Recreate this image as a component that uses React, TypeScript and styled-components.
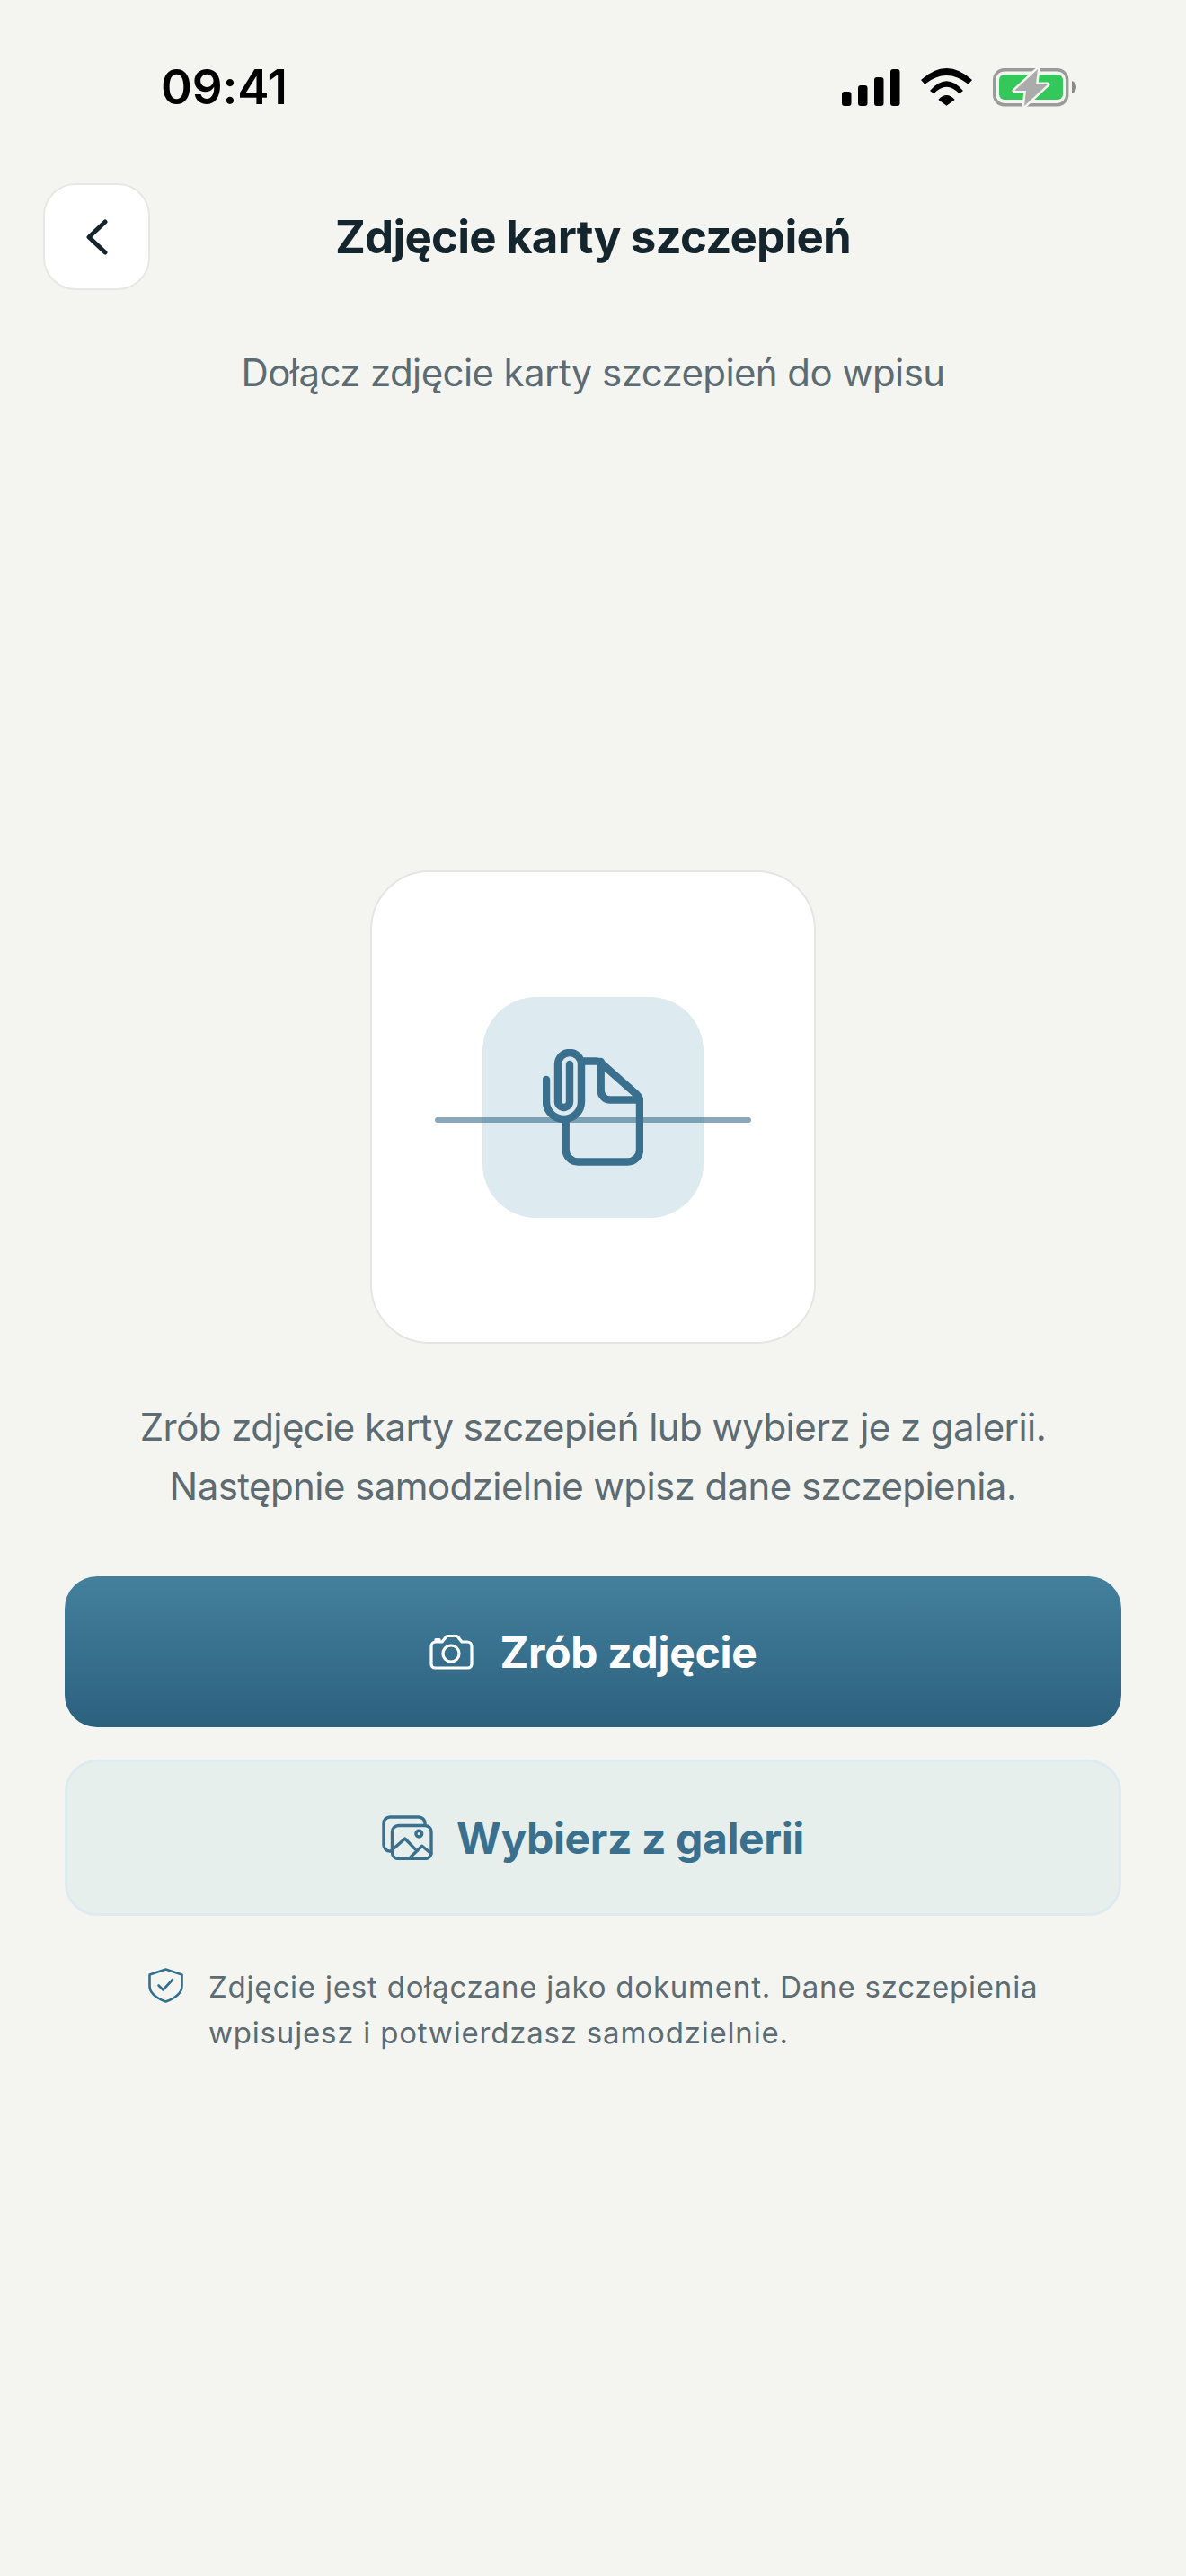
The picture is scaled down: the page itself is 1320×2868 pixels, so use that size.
import styled, { createGlobalStyle } from "styled-components";

const GlobalStyle = createGlobalStyle`
  html, body {
    margin: 0;
    padding: 0;
    background: #f4f5f1;
  }
`;

const Page = styled.div`
  width: 1320px;
  height: 2868px;
  background: #f4f5f1;
  font-family: Inter, "Noto Sans", sans-serif;
  display: flex;
  flex-direction: column;
  overflow: hidden;
`;

const StatusBar = styled.div`
  height: 194px;
  padding: 0 122px 0 179px;
  display: flex;
  align-items: center;
  justify-content: space-between;
`;

const Time = styled.span`
  font-size: 53px;
  font-weight: 600;
  letter-spacing: -0.2px;
  color: #000;
`;

const StatusIcons = styled.div`
  display: flex;
  align-items: center;
  gap: 23px;
`;

const Header = styled.header`
  margin-top: 10px;
  padding: 0 48px;
  display: grid;
  grid-template-columns: 119px 1fr 119px;
  align-items: center;
`;

const BackButton = styled.button`
  width: 119px;
  height: 119px;
  padding: 0;
  box-sizing: border-box;
  background: #fff;
  border: 2px solid #e7e8e5;
  border-radius: 36px;
  display: flex;
  align-items: center;
  justify-content: center;
`;

const Title = styled.h1`
  margin: 0;
  font-size: 51px;
  font-weight: 700;
  letter-spacing: -0.8px;
  color: #14252e;
  text-align: center;
`;

const Subtitle = styled.p`
  margin: 64px 0 0;
  font-size: 42px;
  line-height: 56px;
  letter-spacing: -0.6px;
  color: #5d6b72;
  text-align: center;
`;

const Card = styled.div`
  position: relative;
  margin: 526px auto 0;
  width: 496px;
  height: 527px;
  box-sizing: border-box;
  background: #fff;
  border: 2px solid #e5e6e3;
  border-radius: 66px;
  display: flex;
  align-items: center;
  justify-content: center;
`;

const IconTile = styled.div`
  width: 246px;
  height: 246px;
  background: #ddeaf0;
  border-radius: 60px;
  display: flex;
  align-items: center;
  justify-content: center;
`;

const ScanLine = styled.div`
  position: absolute;
  left: 70px;
  right: 70px;
  top: 273px;
  height: 6px;
  border-radius: 3px;
  background: rgba(58, 112, 141, 0.6);
`;

const DocIcon = styled.svg`
  position: absolute;
  display: block;
`;

const Body = styled.p`
  margin: 60px 0 0;
  font-size: 42px;
  line-height: 66px;
  letter-spacing: -0.57px;
  color: #5d6b72;
  text-align: center;
`;

const Actions = styled.div`
  margin-top: 67px;
  padding: 0 72px;
  display: flex;
  flex-direction: column;
  gap: 36px;
`;

const PrimaryButton = styled.button`
  height: 168px;
  border: none;
  border-radius: 36px;
  background: linear-gradient(180deg, #44809c, #2c617e);
  color: #fff;
  font-family: inherit;
  font-size: 48px;
  font-weight: 700;
  letter-spacing: -0.3px;
  display: flex;
  align-items: center;
  justify-content: center;
  gap: 30px;
`;

const SecondaryButton = styled.button`
  height: 174px;
  box-sizing: border-box;
  border: 3px solid #ddeaf0;
  border-radius: 36px;
  background: #e7efec;
  color: #3a708d;
  font-family: inherit;
  font-size: 48px;
  font-weight: 700;
  letter-spacing: -0.4px;
  display: flex;
  align-items: center;
  justify-content: center;
  gap: 26px;
`;

const Note = styled.div`
  margin-top: 54px;
  padding-left: 165px;
  display: flex;
  align-items: flex-start;
  gap: 28px;
`;

const ShieldIcon = styled.svg`
  margin-top: 4px;
  flex-shrink: 0;
`;

const NoteText = styled.p`
  margin: 0;
  font-size: 33px;
  line-height: 51px;
  letter-spacing: 0.8px;
  color: #5d6b72;
`;

function SignalIcon() {
  return (
    <svg width="65" height="41" viewBox="0 0 65 41">
      <rect x="0" y="25" width="10.5" height="16" rx="3" fill="#000" />
      <rect x="18" y="18" width="10.5" height="23" rx="3" fill="#000" />
      <rect x="36" y="9" width="10.5" height="32" rx="3" fill="#000" />
      <rect x="54" y="0" width="10.5" height="41" rx="3" fill="#000" />
    </svg>
  );
}

function WifiIcon() {
  return (
    <svg width="57" height="42" viewBox="0 0 57 42" fill="#000">
      <path d="M0 13 Q28.5 -13 57 13 L52.7 17.7 Q28.5 -1.7 4.3 17.7 Z" />
      <path d="M10 25 Q28.5 3.6 47 25 L42.7 28.3 Q28.5 13.1 14.3 28.3 Z" />
      <path d="M19.3 35 Q28.5 25 37.7 35 L28.5 41.7 Z" />
    </svg>
  );
}

function BatteryIcon() {
  return (
    <svg width="93" height="43" viewBox="0 0 93 43">
      <rect x="1.7" y="1.7" width="81" height="39" rx="11" fill="none" stroke="#9a9a9a" strokeWidth="3.4" />
      <rect x="7" y="7" width="71" height="28" rx="6" fill="#34c759" />
      <path d="M88 14 C91 15 93 18 93 21 C93 24 91 27 88 28 Z" fill="#8a8a8a" />
      <path
        d="M50 1 L24 25 H37 L35 42 L61 18 H48 Z"
        fill="#ababab"
        stroke="#f4f5f1"
        strokeWidth="5"
        strokeLinejoin="round"
        paintOrder="stroke"
      />
    </svg>
  );
}

function ChevronLeft() {
  return (
    <svg width="24" height="40" viewBox="0 0 24 40" fill="none">
      <path d="M21 3 L3 20 L21 37" stroke="#14252e" strokeWidth="5" strokeLinecap="round" strokeLinejoin="round" />
    </svg>
  );
}

function CameraIcon() {
  return (
    <svg width="49" height="39" viewBox="0 0 49 39" fill="none" stroke="#fff" strokeWidth="3.2" strokeLinejoin="round">
      <path d="M2 13 a5 5 0 0 1 5-5 H14 L18 3 a3 3 0 0 1 2-1.5 H30 a3 3 0 0 1 2 1.5 L36 8 H42 a5 5 0 0 1 5 5 V33 a4 4 0 0 1 -4 4 H6 a4 4 0 0 1 -4 -4 Z" />
      <path d="M7 7 V5.5 H11 V7" />
      <circle cx="24" cy="21" r="9" />
    </svg>
  );
}

function GalleryIcon() {
  return (
    <svg width="57" height="50" viewBox="0 0 57 50" fill="none" stroke="#3a708d" strokeWidth="3.4" strokeLinejoin="round" strokeLinecap="round">
      <path d="M48 10 V9 a7 7 0 0 0 -7 -7 H9 a7 7 0 0 0 -7 7 V33 a7 7 0 0 0 7 7 H10" />
      <rect x="11.5" y="11.5" width="43.5" height="37" rx="7" />
      <circle cx="41.3" cy="20.6" r="3.4" />
      <path d="M11 39 L25.7 26 L37 37.6" />
      <path d="M30.7 47.7 L44.7 34.3 L55 42.7" />
    </svg>
  );
}

function ShieldCheck() {
  return (
    <ShieldIcon width="39" height="39" viewBox="0 0 39 39" fill="none" stroke="#33708f" strokeWidth="2.6" strokeLinejoin="round" strokeLinecap="round">
      <path d="M19.5 1.5 L37.5 7.5 V20 C37.5 29 29 34 19.5 37.5 C10 34 1.5 29 1.5 20 V7.5 Z" />
      <path d="M11.5 19.5 L16.5 24.5 L27 13" />
    </ShieldIcon>
  );
}

function App() {
  return (
    <Page>
      <GlobalStyle />
      <StatusBar>
        <Time>09:41</Time>
        <StatusIcons>
          <SignalIcon />
          <WifiIcon />
          <BatteryIcon />
        </StatusIcons>
      </StatusBar>
      <Header>
        <BackButton>
          <ChevronLeft />
        </BackButton>
        <Title>Zdjęcie karty szczepień</Title>
        <span />
      </Header>
      <Subtitle>Dołącz zdjęcie karty szczepień do wpisu</Subtitle>
      <Card>
        <IconTile />
        <ScanLine />
        <DocIcon
          width="112"
          height="130"
          viewBox="0 0 112 130"
          fill="none"
          stroke="#3a708d"
          strokeWidth="8.4"
          strokeLinecap="round"
          strokeLinejoin="round"
        >
          <path d="M4 34 V58.5 A19.5 19.5 0 0 0 43 58.5 V17 A13 13 0 0 0 17 17 V58.5 A6.5 6.5 0 0 0 30 58.5 V17" />
          <path d="M46 13.5 H60 C62 13.5 63.5 14.2 65 15.5 L104 50 C106.8 52.5 108 54 108 57 V112 A13.5 13.5 0 0 1 94.5 125.5 H39.2 A13.5 13.5 0 0 1 25.7 112 V80" />
          <path d="M64.7 14 V46 A10.5 10.5 0 0 0 75.2 56.5 H108" />
        </DocIcon>
      </Card>
      <Body>
        Zrób zdjęcie karty szczepień lub wybierz je z galerii.
        <br />
        Następnie samodzielnie wpisz dane szczepienia.
      </Body>
      <Actions>
        <PrimaryButton>
          <CameraIcon />
          Zrób zdjęcie
        </PrimaryButton>
        <SecondaryButton>
          <GalleryIcon />
          Wybierz z galerii
        </SecondaryButton>
      </Actions>
      <Note>
        <ShieldCheck />
        <NoteText>
          Zdjęcie jest dołączane jako dokument. Dane szczepienia
          <br />
          wpisujesz i potwierdzasz samodzielnie.
        </NoteText>
      </Note>
    </Page>
  );
}

export default App;
